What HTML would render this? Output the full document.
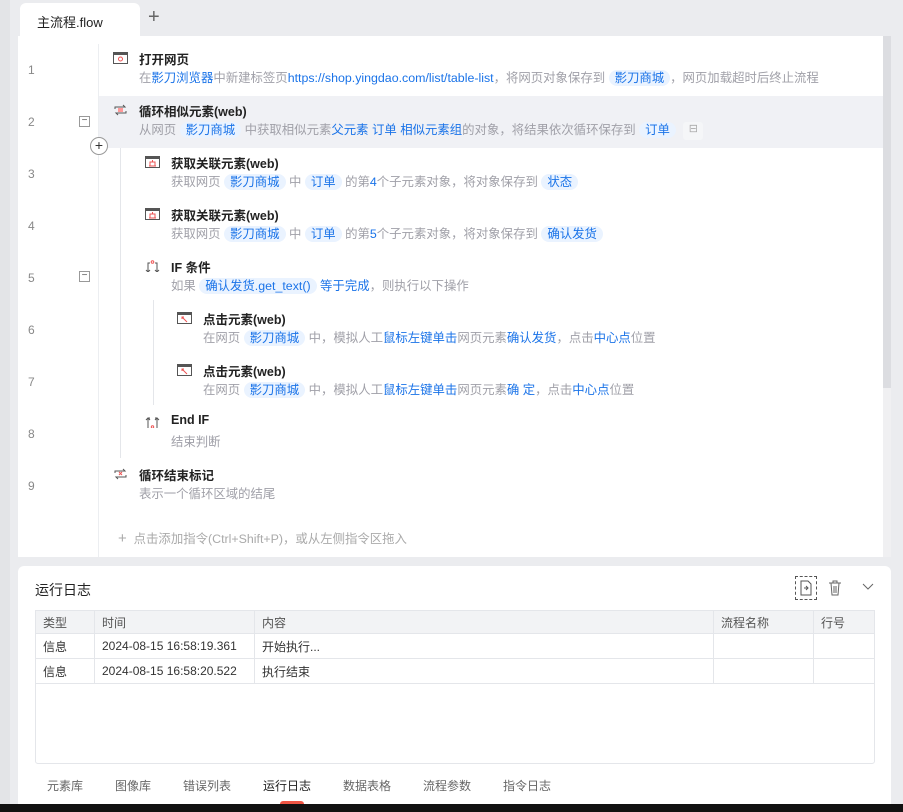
<!DOCTYPE html><html><head><meta charset="utf-8"><style>
*{margin:0;padding:0;box-sizing:border-box}
body{width:903px;height:812px;background:#ebecef;font-family:"Liberation Sans","Noto Sans CJK SC",sans-serif;position:relative;overflow:hidden;color:#333}
.a{position:absolute}
.ed{left:18px;top:36px;width:873px;height:521px;background:#fff}
.ln{position:absolute;left:28px;font-size:12px;color:#888}
.fold{position:absolute;left:79px;width:11px;height:11px;border:1px solid #999;font-size:10px;line-height:8px;text-align:center;color:#555}
.t{position:absolute;font-size:12.5px;font-weight:bold;color:#222;white-space:nowrap}
.d{position:absolute;font-size:12.4px;color:#a0a0a8;white-space:nowrap}
.b{color:#1a73e8}
.p{background:#eaf3ff;color:#1a73e8;border-radius:9px;padding:1px 6px}
.ic{position:absolute;width:15px;height:12px}
.bot{left:18px;top:566px;width:873px;height:246px;background:#fff;border-radius:6px}
table{border-collapse:collapse;font-size:12px;color:#333}
td,th{border:1px solid #e4e6ea;height:25px;padding:0 7px;text-align:left;font-weight:normal}
th{background:#f2f3f5;height:23px;color:#555}
.tab{position:absolute;top:777px;font-size:12px;color:#666}
</style></head><body>
<div class="a" style="left:0;top:0;width:10px;height:812px;background:#e3e4e7"></div>
<div class="a" style="left:20px;top:3px;width:120px;height:34px;background:#fff;border-radius:6px 6px 0 0;font-size:13px;padding:9px 0 0 17px;color:#222">主流程.flow</div>
<div class="a" style="left:148px;top:6px;font-size:20px;color:#666;font-weight:300">+</div>
<div class="a ed"></div>
<div class="a" style="left:98px;top:96px;width:785px;height:52px;background:#f0f1f5"></div>
<div class="a" style="left:98px;top:44px;width:1px;height:513px;background:#eceef1"></div>
<div class="a" style="left:120px;top:148px;width:1px;height:310px;background:#e4e6ea"></div>
<div class="a" style="left:153px;top:300px;width:1px;height:105px;background:#e4e6ea"></div>
<div class="a" style="left:883px;top:36px;width:8px;height:352px;background:#dcdde1"></div>
<div class="a" style="left:883px;top:388px;width:8px;height:169px;background:#f0f0f2"></div>

<div class="ln" style="top:63px">1</div><div class="ln" style="top:115px">2</div><div class="ln" style="top:167px">3</div><div class="ln" style="top:219px">4</div><div class="ln" style="top:271px">5</div><div class="ln" style="top:323px">6</div><div class="ln" style="top:375px">7</div><div class="ln" style="top:427px">8</div><div class="ln" style="top:479px">9</div>
<div class="fold" style="top:116px">−</div><div class="fold" style="top:271px">−</div>
<div class="a" style="left:90px;top:137px;width:18px;height:18px;border:1px solid #999;border-radius:50%;background:#fff;font-size:14px;line-height:15px;text-align:center;color:#333">+</div>

<svg class="ic" style="left:113px;top:52px" viewBox="0 0 15 12"><rect x=".5" y=".5" width="14" height="11" fill="none" stroke="#555"/><rect x=".5" y=".5" width="14" height="2.5" fill="#555"/><circle cx="7.5" cy="7" r="2" fill="none" stroke="#e55"/></svg>
<div class="t" style="left:139px;top:49px">打开网页</div>
<div class="d" style="left:139px;top:68px">在<span class="b">影刀浏览器</span>中新建标签页<span class="b">https://shop.yingdao.com/list/table-list</span>，将网页对象保存到 <span class="p">影刀商城</span>，网页加载超时后终止流程</div>

<svg class="ic" style="left:113px;top:104px" viewBox="0 0 15 12"><path d="M2 5V3h10l-2-2M13 7v2H3l2 2" fill="none" stroke="#555"/><rect x="5" y="4" width="5" height="4" fill="#f99"/></svg>
<div class="t" style="left:139px;top:101px">循环相似元素(web)</div>
<div class="d" style="left:139px;top:120px">从网页 <span class="p">影刀商城</span> 中获取相似元素<span class="b">父元素 订单 相似元素组</span>的对象，将结果依次循环保存到 <span class="p">订单</span> <span style="display:inline-block;width:20px;height:18px;background:#f5f6f8;border-radius:3px;margin-left:4px;vertical-align:middle;color:#aaa;font-size:11px;text-align:center">⊟</span></div>

<svg class="ic" style="left:145px;top:156px" viewBox="0 0 15 12"><rect x=".5" y=".5" width="14" height="11" fill="none" stroke="#555"/><rect x=".5" y=".5" width="14" height="2.5" fill="#555"/><path d="M4 10h7M5 10V6h5v4M7.5 6V4" fill="none" stroke="#e55"/></svg>
<div class="t" style="left:171px;top:153px">获取关联元素(web)</div>
<div class="d" style="left:171px;top:172px">获取网页 <span class="p">影刀商城</span> 中 <span class="p">订单</span> 的第<span class="b">4</span>个子元素对象，将对象保存到 <span class="p">状态</span></div>

<svg class="ic" style="left:145px;top:208px" viewBox="0 0 15 12"><rect x=".5" y=".5" width="14" height="11" fill="none" stroke="#555"/><rect x=".5" y=".5" width="14" height="2.5" fill="#555"/><path d="M4 10h7M5 10V6h5v4M7.5 6V4" fill="none" stroke="#e55"/></svg>
<div class="t" style="left:171px;top:205px">获取关联元素(web)</div>
<div class="d" style="left:171px;top:224px">获取网页 <span class="p">影刀商城</span> 中 <span class="p">订单</span> 的第<span class="b">5</span>个子元素对象，将对象保存到 <span class="p">确认发货</span></div>

<svg class="ic" style="left:145px;top:260px" viewBox="0 0 15 12"><path d="M3 12V3h2M12 12V3h-2M1 10l2 2 2-2M10 10l2 2 2-2" fill="none" stroke="#555"/><circle cx="7.5" cy="2" r="1.3" fill="none" stroke="#e55"/></svg>
<div class="t" style="left:171px;top:257px">IF 条件</div>
<div class="d" style="left:171px;top:276px">如果 <span class="p">确认发货.get_text()</span> <span class="b">等于完成</span>，则执行以下操作</div>

<svg class="ic" style="left:177px;top:312px" viewBox="0 0 15 12"><rect x=".5" y=".5" width="14" height="11" fill="none" stroke="#555"/><rect x=".5" y=".5" width="14" height="2.5" fill="#555"/><path d="M5 5l5 5M7 5h-2v2" fill="none" stroke="#e55"/></svg>
<div class="t" style="left:203px;top:309px">点击元素(web)</div>
<div class="d" style="left:203px;top:328px">在网页 <span class="p">影刀商城</span> 中，模拟人工<span class="b">鼠标左键单击</span>网页元素<span class="b">确认发货</span>，点击<span class="b">中心点</span>位置</div>

<svg class="ic" style="left:177px;top:364px" viewBox="0 0 15 12"><rect x=".5" y=".5" width="14" height="11" fill="none" stroke="#555"/><rect x=".5" y=".5" width="14" height="2.5" fill="#555"/><path d="M5 5l5 5M7 5h-2v2" fill="none" stroke="#e55"/></svg>
<div class="t" style="left:203px;top:361px">点击元素(web)</div>
<div class="d" style="left:203px;top:380px">在网页 <span class="p">影刀商城</span> 中，模拟人工<span class="b">鼠标左键单击</span>网页元素<span class="b">确 定</span>，点击<span class="b">中心点</span>位置</div>

<svg class="ic" style="left:145px;top:416px" viewBox="0 0 15 12"><path d="M3 12V2h2M12 12V2h-2M1 4l2-2 2 2M10 4l2-2 2 2" fill="none" stroke="#555"/><circle cx="7.5" cy="11" r="1.2" fill="none" stroke="#e55"/></svg>
<div class="t" style="left:171px;top:413px">End IF</div>
<div class="d" style="left:171px;top:432px">结束判断</div>

<svg class="ic" style="left:113px;top:468px" viewBox="0 0 15 12"><path d="M2 5V3h10l-2-2M13 7v2H3l2 2" fill="none" stroke="#555"/><path d="M6 4l3 3M9 4l-3 3" stroke="#e55"/></svg>
<div class="t" style="left:139px;top:465px">循环结束标记</div>
<div class="d" style="left:139px;top:484px">表示一个循环区域的结尾</div>

<div class="d" style="left:118px;top:529px;color:#aaa"><span style="font-size:15px">+</span>&nbsp; 点击添加指令(Ctrl+Shift+P)，或从左侧指令区拖入</div>

<div class="a bot"></div>
<div class="a" style="left:35px;top:580px;font-size:14px;color:#222">运行日志</div>
<div class="a" style="left:795px;top:576px;width:22px;height:24px;border:1px dashed #555"></div>
<svg class="a" style="left:799px;top:580px" width="14" height="16" viewBox="0 0 14 16"><path d="M2 1h7l3 3v11H2zM5 8h4M7 6l2 2-2 2" fill="none" stroke="#555"/></svg>
<svg class="a" style="left:828px;top:580px" width="14" height="16" viewBox="0 0 14 16"><path d="M1 3h12M5 3V1h4v2M3 3l1 12h6l1-12M6 6v7M8 6v7" fill="none" stroke="#666"/></svg>
<svg class="a" style="left:862px;top:583px" width="12" height="8" viewBox="0 0 12 8"><path d="M1 1l5 5 5-5" fill="none" stroke="#666"/></svg>
<div class="a" style="left:35px;top:610px;width:840px;height:154px;border:1px solid #e4e6ea;border-radius:3px"></div>
<table class="a" style="left:35px;top:610px;width:840px">
<tr><th style="width:59px">类型</th><th style="width:160px">时间</th><th style="width:459px">内容</th><th style="width:100px">流程名称</th><th>行号</th></tr>
<tr><td>信息</td><td>2024-08-15 16:58:19.361</td><td>开始执行...</td><td></td><td></td></tr>
<tr><td>信息</td><td>2024-08-15 16:58:20.522</td><td>执行结束</td><td></td><td></td></tr>
</table>
<div class="tab" style="left:47px">元素库</div><div class="tab" style="left:115px">图像库</div><div class="tab" style="left:183px">错误列表</div><div class="tab" style="left:263px;color:#222">运行日志</div><div class="tab" style="left:343px">数据表格</div><div class="tab" style="left:423px">流程参数</div><div class="tab" style="left:503px">指令日志</div>
<div class="a" style="left:280px;top:801px;width:24px;height:5px;background:#e54;border-radius:3px 3px 0 0"></div>
<div class="a" style="left:0;top:804px;width:903px;height:8px;background:#111"></div>
</body></html>
